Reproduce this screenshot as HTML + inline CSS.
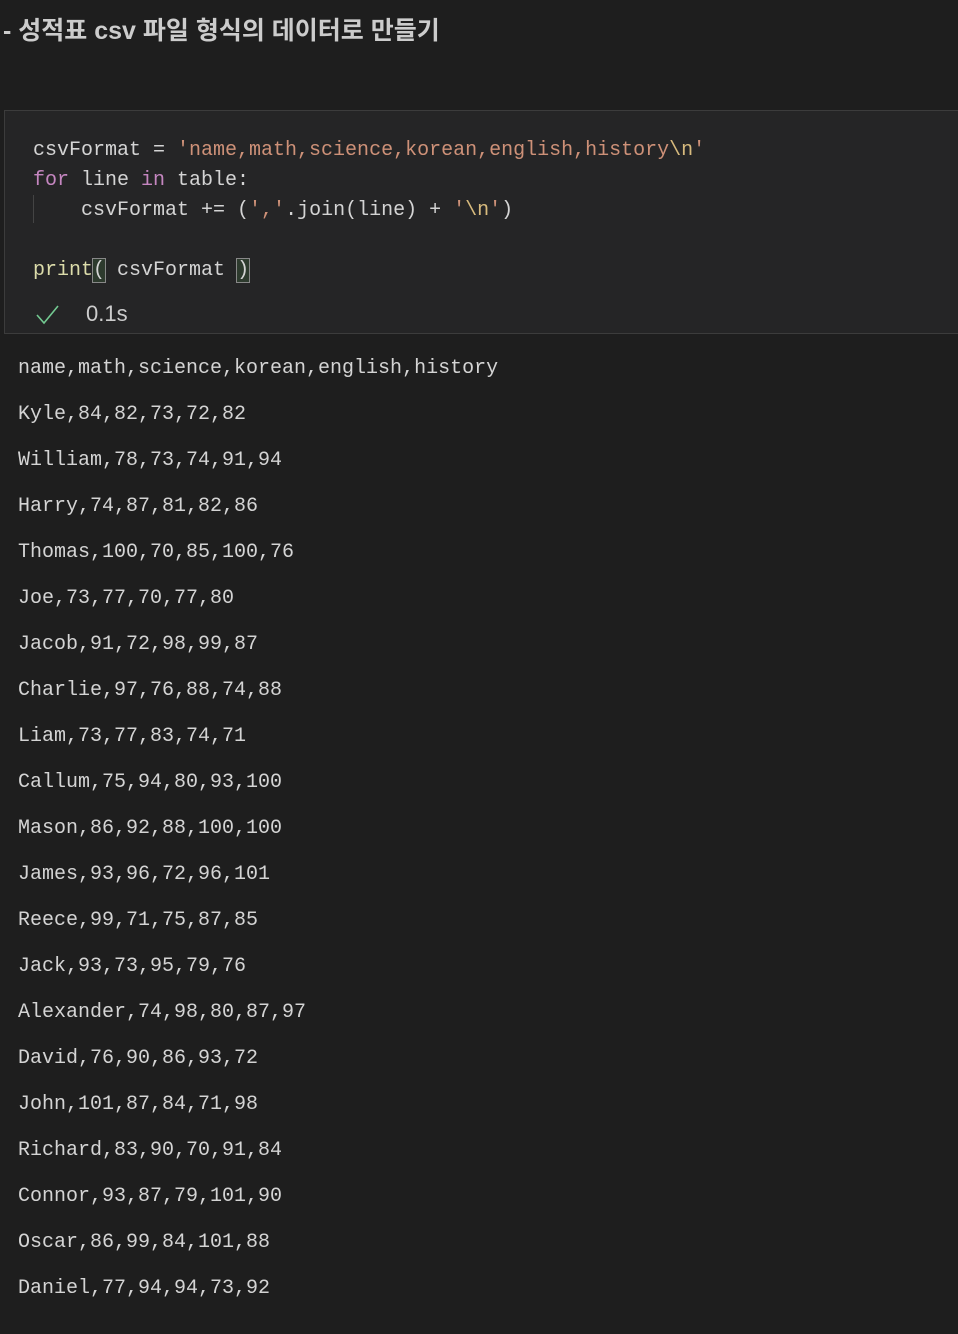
<!DOCTYPE html>
<html><head><meta charset="utf-8"><style>
body{margin:0;background:#1e1e1e;width:958px;height:1334px;overflow:hidden;position:relative;font-family:"Liberation Mono",monospace;}
.t{position:absolute;left:3px;top:11px;font-family:"Liberation Sans","Noto Sans CJK KR",sans-serif;font-weight:bold;font-size:25px;color:#cccccc;}
.cell{position:absolute;left:4px;top:110px;width:960px;height:224px;background:#252526;border:1px solid #3c3c3c;box-sizing:border-box;}
.code{position:absolute;left:33px;top:136px;font-size:20px;line-height:30px;color:#d4d4d4;white-space:pre;}
.s{color:#ce9178}.e{color:#d7ba7d}.k{color:#c586c0}.f{color:#dcdcaa}
.br{outline:1px solid #888;background:#2d3a2d}
.guide{position:absolute;left:33px;top:195px;width:1px;height:28px;background:#444}
.chk{position:absolute;left:36px;top:303px;}
.time{position:absolute;left:86px;top:301px;font-family:"Liberation Sans",sans-serif;font-size:22px;color:#cccccc;}
.out{position:absolute;left:18px;top:346px;font-size:20px;line-height:46px;color:#d4d4d4;white-space:pre;}
</style></head><body>
<div class="t">- 성적표 csv 파일 형식의 데이터로 만들기</div>
<div class="cell"></div>
<div class="guide"></div>
<div class="code">csvFormat = <span class="s">'name,math,science,korean,english,history</span><span class="e">\n</span><span class="s">'</span>
<span class="k">for</span> line <span class="k">in</span> table:
    csvFormat += (<span class="s">','</span>.join(line) + <span class="s">'</span><span class="e">\n</span><span class="s">'</span>)

<span class="f">print</span><span class="br">(</span> csvFormat <span class="br">)</span></div>
<svg class="chk" width="24" height="22" viewBox="0 0 24 22"><path d="M1 12 L8 20 L22 3" fill="none" stroke="#73c991" stroke-width="1.6"/></svg>
<div class="time">0.1s</div>
<div class="out">name,math,science,korean,english,history
Kyle,84,82,73,72,82
William,78,73,74,91,94
Harry,74,87,81,82,86
Thomas,100,70,85,100,76
Joe,73,77,70,77,80
Jacob,91,72,98,99,87
Charlie,97,76,88,74,88
Liam,73,77,83,74,71
Callum,75,94,80,93,100
Mason,86,92,88,100,100
James,93,96,72,96,101
Reece,99,71,75,87,85
Jack,93,73,95,79,76
Alexander,74,98,80,87,97
David,76,90,86,93,72
John,101,87,84,71,98
Richard,83,90,70,91,84
Connor,93,87,79,101,90
Oscar,86,99,84,101,88
Daniel,77,94,94,73,92</div>
</body></html>
